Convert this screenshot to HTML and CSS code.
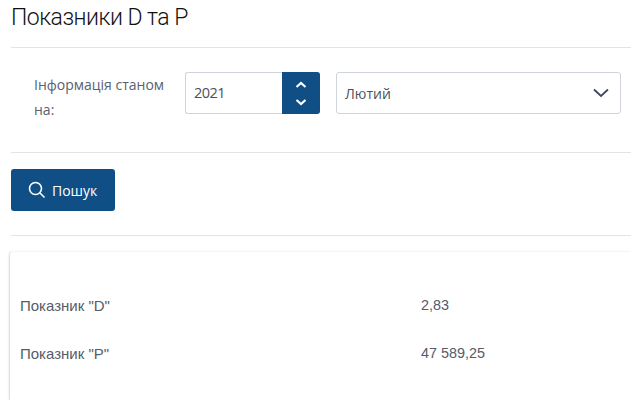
FILE: index.html
```html
<!DOCTYPE html>
<html lang="uk">
<head>
  <meta charset="UTF-8">
  <meta name="viewport" content="width=device-width, initial-scale=1.0">
  <title>Показники D та P</title>
  <link rel="stylesheet" href="styles.css">
</head>
<body>
  <h1 class="page-title">Показники D та P</h1>
  <hr class="divider">

  <div class="filter-row">
    <label class="filter-label">Інформація станом на:</label>
    <div class="year-input">
      <span class="year-value">2021</span>
      <div class="spinner">
        <svg width="12" height="8" viewBox="0 0 12 8"><path d="M1.500 6 6 2l4.500 4" fill="none" stroke="#fff" stroke-width="2.200"/></svg>
        <svg width="12" height="8" viewBox="0 0 12 8"><path d="M1.500 2 6 6l4.500-4" fill="none" stroke="#fff" stroke-width="2.200"/></svg>
      </div>
    </div>
    <div class="month-select">
      <span>Лютий</span>
      <svg width="16" height="10" viewBox="0 0 16 10"><path d="M1 1.500 8 8l7-6.500" fill="none" stroke="#3d4a5c" stroke-width="1.800"/></svg>
    </div>
  </div>
  <hr class="divider">

  <button class="search-btn">
    <svg width="18" height="18" viewBox="0 0 18 18"><circle cx="7.500" cy="7.500" r="6" fill="none" stroke="#fff" stroke-width="1.600"/><path d="M12 12l4.500 4.500" stroke="#fff" stroke-width="1.600"/></svg>
    Пошук
  </button>
  <hr class="divider divider-low">

  <div class="result-card">
    <div class="result-row">
      <span class="result-name">Показник "D"</span>
      <span class="result-value">2,83</span>
    </div>
    <div class="result-row">
      <span class="result-name">Показник "P"</span>
      <span class="result-value">47 589,25</span>
    </div>
  </div>
</body>
</html>
```

FILE: styles.css
```css
html, body {
  height: 100%;
}
body {
  margin: 0;
  padding-left: 11px;
  overflow: hidden;
  background: #fff;
  color: #4a5160;
  font-family: "Open Sans", sans-serif;
  font-size: 14px;
}
.page-title {
  margin: 0;
  padding-top: 3px;
  height: 47px;
  box-sizing: border-box;
  color: #111;
  font-family: Roboto, sans-serif;
  font-size: 23px;
  font-weight: 300;
  letter-spacing: -0.500px;
  line-height: 30px;
}
.divider {
  margin: 0;
  border: none;
  border-top: 1px solid #e3e3e3;
}
.filter-row {
  display: flex;
  align-items: flex-start;
  padding: 24px 10px 30px 23px;
}
.filter-label {
  width: 151px;
  line-height: 25px;
  color: #5a6170;
}
.year-input {
  display: flex;
  width: 135px;
  height: 42px;
  box-sizing: border-box;
  border: 1px solid #cfd4db;
  border-right: none;
  border-radius: 3px;
}
.year-value {
  flex: 1;
  padding-left: 8px;
  line-height: 40px;
  font-size: 14.500px;
  letter-spacing: -0.500px;
}
.spinner {
  display: flex;
  flex-direction: column;
  align-items: center;
  justify-content: center;
  gap: 9px;
  width: 38px;
  margin: -1px 0;
  background: #0f4f85;
  border-radius: 0 3px 3px 0;
}
.month-select {
  display: flex;
  align-items: center;
  justify-content: space-between;
  width: 285px;
  height: 42px;
  margin-left: 16px;
  padding: 0 11px 0 8px;
  box-sizing: border-box;
  border: 1px solid #cfd4db;
  border-radius: 3px;
}
.search-btn {
  display: flex;
  align-items: center;
  gap: 6px;
  width: 104px;
  height: 42px;
  margin-top: 16px;
  padding: 0 0 0 17px;
  border: none;
  border-radius: 3px;
  background: #0f4f85;
  color: #fff;
  font-family: inherit;
  font-size: 14px;
}
.divider-low {
  margin-top: 24px;
}
.result-card {
  margin: 16px 0 0 -1px;
  padding-top: 29px;
  height: 119px;
  border-radius: 3px 0 0 0;
  box-shadow: -1px 0 2px rgba(0, 0, 0, 0.16);
}
.result-row {
  display: flex;
  height: 48px;
  align-items: center;
  padding-left: 10px;
  color: #555c6a;
  font-family: "Liberation Sans", Arial, sans-serif;
  font-size: 14.400px;
}
.result-name {
  width: 401px;
  font-size: 15px;
}
```
